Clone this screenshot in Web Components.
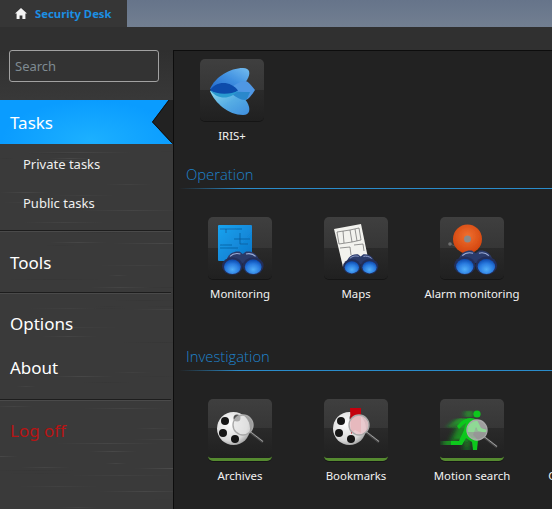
<!DOCTYPE html>
<html><head><meta charset="utf-8"><style>
html,body{margin:0;height:100%;overflow:hidden;background:#2f2f2f}
body{font-family:"Noto Sans","Open Sans",sans-serif}
</style></head><body>
<sd-app>
  <sd-sidebar slot="side">
    <sd-search></sd-search>
    <sd-item kind="active">Tasks</sd-item>
    <sd-item kind="sub">Private tasks</sd-item>
    <sd-item kind="sub" class="last">Public tasks</sd-item>
    <sd-rule></sd-rule>
    <sd-item style="height:60px">Tools</sd-item>
    <sd-rule></sd-rule>
    <sd-item style="margin-top:7px">Options</sd-item>
    <sd-item>About</sd-item>
    <sd-rule style="margin-top:10px"></sd-rule>
    <sd-item kind="danger" style="height:58px">Log off</sd-item>
  </sd-sidebar>
  <sd-panel slot="panel">
    <sd-row style="padding:8px 0 0 0"><sd-tile icon="iris">IRIS+</sd-tile></sd-row>
    <sd-section style="margin-top:18px">Operation</sd-section>
    <sd-row>
      <sd-tile icon="monitoring">Monitoring</sd-tile>
      <sd-tile icon="maps">Maps</sd-tile>
      <sd-tile icon="alarm">Alarm monitoring</sd-tile>
    </sd-row>
    <sd-section style="margin-top:42px">Investigation</sd-section>
    <sd-row>
      <sd-tile icon="archives" green>Archives</sd-tile>
      <sd-tile icon="bookmarks" green>Bookmarks</sd-tile>
      <sd-tile icon="motion" green>Motion search</sd-tile>
      <sd-tile green>Camera events</sd-tile>
    </sd-row>
  </sd-panel>
</sd-app>
<script>
const def=(name,css,html,extra)=>{customElements.define(name,class extends HTMLElement{
  constructor(){super();const r=this.attachShadow({mode:'open'});r.innerHTML=`<style>${css}</style>${html}`;}
  connectedCallback(){extra&&extra.call(this,this.shadowRoot)}
})};

def('sd-app',`:host{display:grid;grid-template-rows:27px 1fr;height:509px;width:552px;overflow:hidden;color:#fff}
 .bar{display:flex;background:linear-gradient(#66748a,#727f91)}
 .tab{width:127px;display:flex;align-items:center;gap:8px;padding-left:15px;box-sizing:border-box;background:#363636;color:#1c8fe3;font-weight:700;font-size:11.3px}
 .tab svg{flex:none}
 .main{display:grid;grid-template-columns:173px 1fr;min-height:0;background:#303030}
 .p{padding-top:23px;min-width:0;min-height:0;display:flex}`,
 `<div class="bar"><div class="tab"><svg width="12" height="11" viewBox="0 0 12 11"><path fill="#f4f4f4" d="M6 0 12 5.6 10.4 5.6V11H7.4V7.4H4.6V11H1.6V5.6H0Z"/></svg><span>Security Desk</span></div></div>
 <div class="main"><slot name="side"></slot><div class="p"><slot name="panel"></slot></div></div>`);

def('sd-sidebar',`:host{display:block;padding-top:23px;position:relative;min-height:0}
 .t{position:absolute;inset:23px 0 0 0}
 ::slotted(*){position:relative}`,`<div class="t"></div><slot></slot>`,function(r){
  let s=7,rnd=()=>(s=(s*16807)%2147483647)/2147483647,imgs=[],pos=[],sz=[];
  for(let i=0;i<70;i++){const w=20+rnd()*90;imgs.push(`linear-gradient(90deg,transparent,rgba(${rnd()>.5?'255,255,255':'0,0,0'},${.03+rnd()*.04}),transparent)`);
   pos.push(`${Math.round(rnd()*173-20)}px ${Math.round(rnd()*460)}px`);sz.push(`${Math.round(w)}px 1px`);}
  r.querySelector('.t').style.cssText=`background-color:#3a3a3a;background-image:linear-gradient(#2f2f2f,#3a3a3a 60px),${imgs.join(',')};background-repeat:no-repeat;background-position:0 0,${pos.join(',')};background-size:100% 60px,${sz.join(',')}`;
 });

def('sd-search',`:host{display:block;position:relative;box-sizing:border-box;margin:0 14px 18px 9px;height:32px;border:1px solid #a2a2a2;border-radius:3px;background:#333;color:#7f8b92;font-size:13px;line-height:30px;padding-left:5px}`,`Search`);

def('sd-item',`:host{display:flex;align-items:center;position:relative;height:44px;padding-left:10px;font-size:17px;color:#fff;box-sizing:border-box}
 :host([kind=sub]){height:39px;padding-left:23px;font-size:13px;color:#f0f0f0}
 :host(.last){height:47px;padding-bottom:8px}
 :host([kind=danger]){color:#b81414}
 :host([kind=active]){background:radial-gradient(ellipse 110px 50px at 90px 40px,#1cb0ff,#0a9cff 80%)}
 svg{position:absolute;right:0;top:0;display:none}
 :host([kind=active]) svg{display:block}`,
 `<slot></slot><svg width="21" height="44" viewBox="0 0 21 44"><path d="M21 -0.5 H17 L0 22 L21 44.5Z" fill="#222"/><path d="M17 0 L0.5 22 L20.5 43.5" fill="none" stroke="#0f0f0f" stroke-width="1"/></svg>`);

def('sd-rule',`:host{display:block;height:2px;background:linear-gradient(#1d1d1d 50%,#4a4a4a 50%);margin-right:2px;position:relative}`,``);

def('sd-panel',`:host{display:block;flex:1;min-width:0;box-sizing:border-box;height:459px;background:#222;border-left:1px solid #0d0d0d;border-top:1px solid #0d0d0d;overflow:hidden;position:relative}`,`<slot></slot>`);

def('sd-section',`:host{display:block;position:relative;padding-left:12px;height:26px;font-size:14.8px;font-weight:300;line-height:22px;color:#1f82cc;font-family:"Open Sans","Noto Sans",sans-serif;box-sizing:border-box}
 i{position:absolute;left:5px;right:0;bottom:0;height:1px;background:linear-gradient(90deg,#222,#2a8ccb 60px)}`,`<slot></slot><i></i>`);

def('sd-row',`:host{display:flex;padding:28px 0 0 8px;width:520px}`,`<slot></slot>`);

const bino=(x,y,s)=>`<g transform="translate(${x} ${y}) scale(${s})">
 <path d="M5 15C7 5 14 1 22 2L26 5L30 2C38 1 45 5 47 15L30 17H22Z" fill="#2b3a6b"/>
 <path d="M10 8C14 4 19 4 23 5" stroke="#9cadd6" stroke-width="1.300" fill="none"/><path d="M30 5C34 4 39 5 42 8" stroke="#9cadd6" stroke-width="1.300" fill="none"/>
 <ellipse cx="13" cy="20" rx="13" ry="11" fill="#232f5a"/><ellipse cx="39" cy="20" rx="13" ry="11" fill="#232f5a"/>
 <ellipse cx="13" cy="21" rx="10.500" ry="9" fill="url(#bl)"/><ellipse cx="39" cy="21" rx="10.500" ry="9" fill="url(#bl)"/></g>`;
const reel=()=>`<circle cx="25.500" cy="29.500" r="16.500" fill="url(#film)"/>`+[[17,22,4],[15,34,4],[27,40,4]].map(h=>`<circle cx="${h[0]}" cy="${h[1]}" r="${h[2]}" fill="#141414"/>`).join('')+`<circle cx="29" cy="19" r="3.500" fill="#555"/>`;
const lens=(cx,cy,r)=>`<path d="M${cx+7} ${cy+7}L${cx+20} ${cy+17}" stroke="#4a4a4a" stroke-width="2.400"/><path d="M${cx+7} ${cy+6.500}L${cx+20} ${cy+16.500}" stroke="#b5b5b5" stroke-width=".8"/>
 <circle cx="${cx}" cy="${cy}" r="${r}" fill="rgba(228,228,228,.6)" stroke="#a9a9a9" stroke-width="1.400"/>`;
const defs=`<defs>
 <radialGradient id="bl" cx=".5" cy=".7" r=".65"><stop offset="0" stop-color="#52aef8"/><stop offset=".6" stop-color="#2a7ce0"/><stop offset="1" stop-color="#0f4fb4"/></radialGradient>
 <radialGradient id="film" cx=".4" cy=".35" r=".75"><stop offset="0" stop-color="#fff"/><stop offset=".7" stop-color="#d8d8d8"/><stop offset="1" stop-color="#8d8d8d"/></radialGradient>
 <linearGradient id="w1" x1="0" y1="1" x2="1" y2="0"><stop offset="0" stop-color="#2468cc"/><stop offset=".5" stop-color="#3f8fe0"/><stop offset="1" stop-color="#74bdf0"/></linearGradient>
 <linearGradient id="w2" x1="0" y1="0" x2="1" y2="1"><stop offset="0" stop-color="#8fd8ee"/><stop offset=".5" stop-color="#55ace4"/><stop offset="1" stop-color="#3f8ede"/></linearGradient>
 <linearGradient id="scr" x1="0" y1="0" x2="1" y2="1"><stop offset="0" stop-color="#1aa4f0"/><stop offset="1" stop-color="#0c74c8"/></linearGradient>
 <radialGradient id="bell" cx=".5" cy=".4" r=".65"><stop offset="0" stop-color="#f07030"/><stop offset="1" stop-color="#d0400a"/></radialGradient>
 <filter id="sf" x="-10%" y="-10%" width="120%" height="120%"><feGaussianBlur stdDeviation=".35"/></filter>
 <filter id="mb" x="-40%" y="-10%" width="160%" height="120%"><feGaussianBlur stdDeviation="3 .7"/></filter></defs>`;
const runner=`<circle cx="41" cy="11" r="3.600"/><path d="M25 19C30 14 37 14 41 17L45 25 51 27 50 30 42 28 40 24 37 32 42 37 41 47H37L36 39 30 35 26 42 15 42V38H23L28 27 30 20 27 22 23 26 21 23Z"/>`;
const icons={
 iris:`<path d="M10 30C15 18 30 9 43 9C50 9 51 14 47 21C43 27 36 31 26 31Z" fill="url(#w1)"/>
  <path d="M10 32C15 44 28 56 43 56C50 56 51 50 47 43C43 37 36 32 26 32Z" fill="url(#w2)"/>
  <path d="M27 31C33 27 40 22 45 22C48 22 52 27 55 31C52 36 48 41 45 41C40 41 33 36 27 31Z" fill="#4f97e4"/>
  <path d="M27 31.500C34 33 41 33 50 33C48 38 47 41 45 41C40 41 33 36 27 31.500Z" fill="#2c88cc"/>
  <path d="M10 31C17 21 31 22 38 31.500C31 38 17 38 10 31Z" fill="#0c4cab"/>
  <path d="M10 31C17 36 31 36 38 31.500C31 41 17 41 10 31Z" fill="#2a9ad0"/>`,
 monitoring:`<rect x="10" y="8" width="34" height="36" rx="1" fill="url(#scr)"/>
  <g stroke="#0b4f8e" stroke-width=".7" fill="none" opacity=".9"><path d="M12 12H34M12 28H24M12 31H30M32 16V27H40M26 22H42M18 12V16"/></g>`+bino(14,33,.8),
 maps:`<path d="M10 12L37 7 44 41 19 50Z" fill="#f2f2ee"/>
  <g stroke="#6a6a6a" stroke-width=".7" fill="none"><path d="M13 15L26 13 28 25 15 27ZM26 13L35 11 37 23 28 25M19 14L20 26M31 12L33 24M16 31L26 30 27 38M30 28L39 27 40 34"/></g>`+bino(19,36,.68),
 alarm:`<path d="M10 27L20 31" stroke="#555" stroke-width="1"/><circle cx="10" cy="27" r="1.800" fill="#707070"/><circle cx="27.500" cy="22" r="14.500" fill="url(#bell)"/><circle cx="27.500" cy="22" r="3.500" fill="#8a8a8a"/>`+bino(14,32,.83),
 archives:reel()+lens(35,26,10),
 bookmarks:reel()+`<path d="M26 9H37V34L31 31 27 35Z" fill="#c4000c"/><circle cx="35" cy="26" r="10" fill="rgba(245,150,165,.8)"/>`+lens(35,26,10),
 motion:`<g fill="#11d622" opacity=".6" filter="url(#mb)" transform="translate(-12 4)">${runner}</g><g fill="#10c81e" transform="translate(-4 4)">${runner}</g>`+lens(37,31,10)+`<path d="M27.500 33A10 10 0 0 0 46.500 33Z" fill="rgba(150,150,150,.7)"/>`
};

def('sd-tile',`:host{display:flex;flex-direction:column;align-items:center;width:116px;flex:none;font-size:11.4px;color:#f2f2f2}
 .b{position:relative;width:64px;height:62px;border-radius:5px;overflow:hidden;box-shadow:0 1px 0 #151515;background:linear-gradient(#3f3f3f,#363636 50%,#2a2a2a 50%,#202020)}
 :host([green]) .b{border-bottom:3px solid #558a30;box-sizing:border-box}
 svg{position:absolute;left:0;top:0}
 span{margin-top:6px;height:18px;line-height:18px;white-space:nowrap}`,
 `<div class="b"></div><span><slot></slot></span>`,function(r){
  const k=this.getAttribute('icon');
  if(k) r.querySelector('.b').innerHTML=`<svg width="64" height="62" viewBox="0 0 64 62">${defs}<g filter="url(#sf)">${icons[k]}</g></svg>`;
 });
</script>
</body></html>
